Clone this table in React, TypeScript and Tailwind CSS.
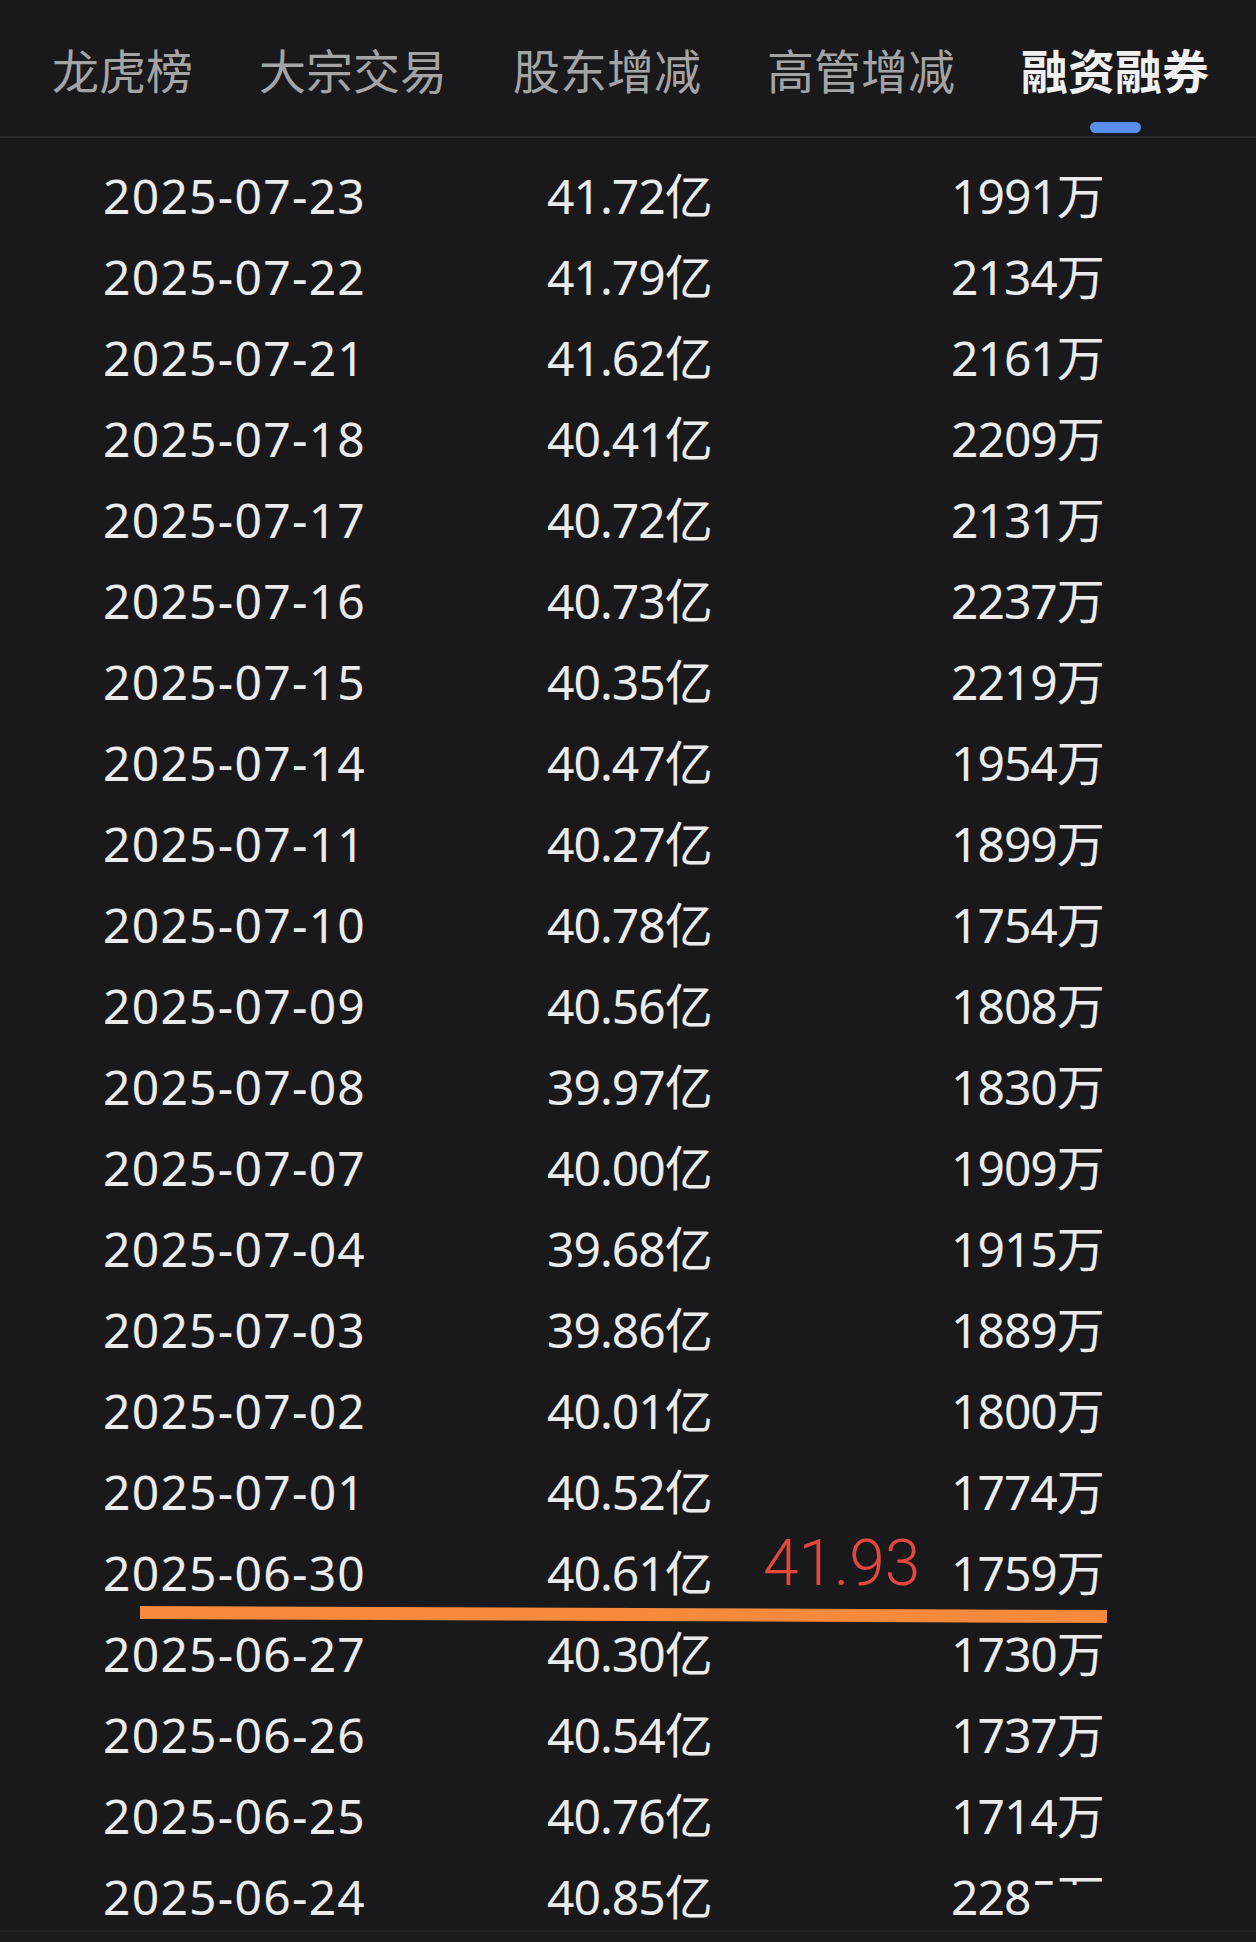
import React from "react";

const rows: [string, string, string][] = [
  ["2025-07-23", "41.72亿", "1991万"],
  ["2025-07-22", "41.79亿", "2134万"],
  ["2025-07-21", "41.62亿", "2161万"],
  ["2025-07-18", "40.41亿", "2209万"],
  ["2025-07-17", "40.72亿", "2131万"],
  ["2025-07-16", "40.73亿", "2237万"],
  ["2025-07-15", "40.35亿", "2219万"],
  ["2025-07-14", "40.47亿", "1954万"],
  ["2025-07-11", "40.27亿", "1899万"],
  ["2025-07-10", "40.78亿", "1754万"],
  ["2025-07-09", "40.56亿", "1808万"],
  ["2025-07-08", "39.97亿", "1830万"],
  ["2025-07-07", "40.00亿", "1909万"],
  ["2025-07-04", "39.68亿", "1915万"],
  ["2025-07-03", "39.86亿", "1889万"],
  ["2025-07-02", "40.01亿", "1800万"],
  ["2025-07-01", "40.52亿", "1774万"],
  ["2025-06-30", "40.61亿", "1759万"],
  ["2025-06-27", "40.30亿", "1730万"],
  ["2025-06-26", "40.54亿", "1737万"],
  ["2025-06-25", "40.76亿", "1714万"],
  ["2025-06-24", "40.85亿", "2285万"],
];

const tabs = ["龙虎榜", "大宗交易", "股东增减", "高管增减", "融资融券"];

export default function App() {
  return (
    <div
      className="relative w-[1256px] h-[1942px] overflow-hidden bg-[#19191b] text-[#ebebeb]"
      style={{ fontFamily: '"Noto Sans", "Noto Sans CJK SC", sans-serif' }}
    >
      <div className="flex h-[138px] gap-[66px] border-b-2 border-[#2a2a2c] pl-[52px]">
        {tabs.map((t, i) => {
          const active = i === tabs.length - 1;
          return (
            <div key={t} className="flex flex-col items-center pt-[41px]">
              <span
                className={
                  active
                    ? "text-[47px] leading-[56px] font-bold text-[#f0f0f0]"
                    : "text-[47px] leading-[56px] text-[#a4a4a4]"
                }
                style={{ fontFamily: '"Noto Sans CJK SC", sans-serif' }}
              >
                {t}
              </span>
              {active && <div className="mt-[25px] h-[11px] w-[51px] rounded-full bg-[#5b8eea]" />}
            </div>
          );
        })}
      </div>
      <div className="pt-[17px]">
        {rows.map(([d, v, n]) => (
          <div key={d} className="flex h-[81px] items-center pl-[103px] text-[48px]">
            <span className="w-[444px] tracking-[1.25px]">{d}</span>
            <span className="w-[404px] tracking-[-1px]">{v}</span>
            <span className="tracking-[-1px]">{n}</span>
          </div>
        ))}
      </div>
      <div
        className="absolute left-[763px] top-[1525px] text-[64px] font-light leading-[78px] text-[#e2483e]"
        style={{ fontFamily: 'Roboto, sans-serif' }}
      >
        41.93
      </div>
      <div className="absolute left-[140px] top-[1608px] h-[13px] w-[967px] rotate-[0.25deg] bg-[#f68a3c]" />
      <div className="absolute left-[1030px] top-[1885px] h-[42px] w-[214px] bg-[#19191b]" />
      <div className="absolute left-0 top-[1930px] h-[12px] w-full border-t-2 border-[#242426] bg-[#1c1c1e]" />
    </div>
  );
}
